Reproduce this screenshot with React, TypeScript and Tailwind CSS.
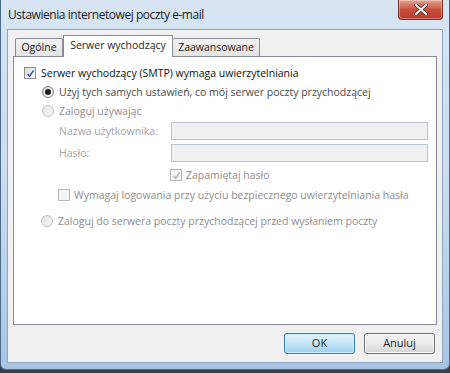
import React from "react"

const font = { fontFamily: '"Open Sans", "Noto Sans", sans-serif' }

function CheckBox({ checked, disabled }: { checked?: boolean; disabled?: boolean }) {
  return (
    <span
      className={`flex h-[12px] w-[12px] shrink-0 items-center justify-center border ${
        disabled ? "border-[#b8b8b8] bg-[#f4f4f4]" : "border-[#8e8f8f] bg-gradient-to-br from-[#dcdcdc] to-[#fdfdfd]"
      }`}
    >
      {checked && (
        <svg width="9" height="9" viewBox="0 0 9 9">
          <path
            d="M1.5 4.8 L3.6 7.2 L7.6 1.4"
            fill="none"
            stroke={disabled ? "#b0b0b0" : "#3355a8"}
            strokeWidth="1.5"
          />
        </svg>
      )}
    </span>
  )
}

function Radio({ checked, disabled }: { checked?: boolean; disabled?: boolean }) {
  return (
    <span
      className={`flex h-[12px] w-[12px] shrink-0 items-center justify-center rounded-full border ${
        disabled ? "border-[#c0c0c0] bg-gradient-to-br from-[#e4e4e4] to-[#f8f8f8]" : "border-[#7f7f7f] bg-gradient-to-br from-[#dadada] to-[#fafafa]"
      }`}
    >
      {checked && <span className="h-[6px] w-[6px] rounded-full bg-[#1c1c1c]" />}
    </span>
  )
}

export default function App() {
  return (
    <div className="h-[373px] w-[450px] overflow-hidden bg-[#3a3f45]" style={font}>
      {/* window frame */}
      <div className="flex h-[370px] flex-col rounded-b-[6px] border-x border-b border-[#4a6a8c] bg-gradient-to-b from-[#d7e5f3] via-[#cadcef] to-[#a9c5e3]">
        {/* title bar */}
        <div className="flex h-[29px] items-start justify-between">
          <span className="pl-[7px] pt-[7px] text-[12px] leading-[16px] tracking-[-0.45px] text-[#1e1e1e]">
            Ustawienia internetowej poczty e-mail
          </span>
          <div className="mr-[6px] flex h-[20px] w-[45px] items-center justify-center rounded-b-[4px] border border-t-0 border-[#7a2e24] bg-gradient-to-b from-[#e8a593] via-[#c7503b] to-[#c0392b] shadow-[inset_0_0_0_1px_rgba(255,255,255,0.35)]">
            <svg width="14" height="11" viewBox="0 0 14 11">
              <path d="M2 1 L12 10 M12 1 L2 10" stroke="#4a1a12" strokeWidth="3.6" strokeLinecap="round" />
              <path d="M2 1 L12 10 M12 1 L2 10" stroke="#ffffff" strokeWidth="2.2" strokeLinecap="round" />
            </svg>
          </div>
        </div>

        {/* client area */}
        <div className="mx-[6px] flex flex-1 flex-col border border-[#8da6c1] bg-[#f0f0f0]">
          <div className="mx-[5px] mt-[4px] flex flex-col">
            {/* tabs */}
            <div className="flex h-[22px] items-end pl-[2px] text-[10.5px] text-[#1e1e1e]">
              <div className="-mb-px flex h-[19px] w-[48px] items-center justify-center rounded-t-[2px] border border-b-0 border-[#898c95] bg-gradient-to-b from-[#f2f2f2] to-[#e3e3e3]">
                Ogólne
              </div>
              <div className="relative z-10 -mb-px flex h-[22px] w-[110px] items-start justify-center border border-b-0 border-[#898c95] bg-white pt-[2px]">
                Serwer wychodzący
              </div>
              <div className="-mb-px flex h-[19px] w-[87px] items-center justify-center rounded-t-[2px] border border-b-0 border-l-0 border-[#898c95] bg-gradient-to-b from-[#f2f2f2] to-[#e3e3e3]">
                Zaawansowane
              </div>
            </div>

            {/* tab panel */}
            <div className="flex h-[269px] flex-col border border-[#898c95] bg-white pl-[10px] pr-[8px] pt-[8px] text-[10.5px] leading-[16px]">
              <div className="flex items-center gap-[5px] text-[#111]">
                <CheckBox checked />
                <span>Serwer wychodzący (SMTP) wymaga uwierzytelniania</span>
              </div>
              <div className="ml-[18px] mt-[3px] flex items-center gap-[5px] text-[#4a4a4a]">
                <Radio checked />
                <span>Użyj tych samych ustawień, co mój serwer poczty przychodzącej</span>
              </div>
              <div className="ml-[18px] mt-[3px] flex items-center gap-[5px] text-[#8d8d8d]">
                <Radio disabled />
                <span>Zaloguj używając</span>
              </div>

              <div className="ml-[35px] mt-[3px] grid grid-cols-[112px_1fr] items-center gap-y-[4px] text-[#a3a3a3]">
                <span>Nazwa użytkownika:</span>
                <div className="h-[18px] border border-[#b9c3cf] bg-[#f0f0f0]" />
                <span>Hasło:</span>
                <div className="h-[18px] border border-[#b9c3cf] bg-[#f0f0f0]" />
              </div>

              <div className="ml-[146px] mt-[5px] flex items-center gap-[4px] text-[#8d8d8d]">
                <CheckBox checked disabled />
                <span>Zapamiętaj hasło</span>
              </div>
              <div className="ml-[34px] mt-[4px] flex items-center gap-[4px] text-[#8d8d8d]">
                <CheckBox disabled />
                <span>Wymagaj logowania przy użyciu bezpiecznego uwierzytelniania hasła</span>
              </div>
              <div className="ml-[17px] mt-[10px] flex items-center gap-[5px] text-[#8d8d8d]">
                <Radio disabled />
                <span>Zaloguj do serwera poczty przychodzącej przed wysłaniem poczty</span>
              </div>
            </div>
          </div>

          {/* buttons */}
          <div className="mr-[7px] mt-[8px] flex justify-end gap-[9px] text-[11px] text-[#1e1e1e]">
            <button className="flex h-[21px] w-[71px] items-center justify-center rounded-[3px] border border-[#3c7fb1] bg-gradient-to-b from-[#e5f4fc] via-[#c4e5f6] to-[#98d1ef] shadow-[inset_0_0_0_1px_#c8ecfd]">
              OK
            </button>
            <button className="flex h-[21px] w-[71px] items-center justify-center rounded-[3px] border border-[#707070] bg-gradient-to-b from-[#f2f2f2] via-[#ebebeb] to-[#d3d3d3] shadow-[inset_0_0_0_1px_#fcfcfc]">
              Anuluj
            </button>
          </div>
        </div>
        <div className="h-[6px]" />
      </div>
    </div>
  )
}
